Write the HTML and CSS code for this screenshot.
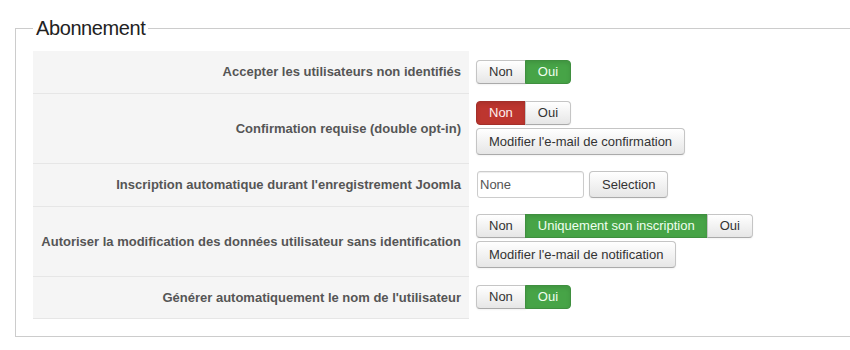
FILE: index.html
```html
<!DOCTYPE html>
<html lang="fr">
<head>
    <meta charset="UTF-8">
    <meta name="viewport" content="width=device-width, initial-scale=1.0">
    <title>Abonnement</title>
    <link rel="stylesheet" href="styles.css">
</head>
<body>

<fieldset class="adminform">
    <legend>Abonnement</legend>

    <table class="params">
        <tr>
            <th>Accepter les utilisateurs non identifiés</th>
            <td>
                <div class="btn-group">
                    <button type="button" class="btn">Non</button>
                    <button type="button" class="btn active-yes">Oui</button>
                </div>
            </td>
        </tr>
        <tr>
            <th>Confirmation requise (double opt-in)</th>
            <td>
                <div class="btn-group">
                    <button type="button" class="btn active-no">Non</button>
                    <button type="button" class="btn">Oui</button>
                </div>
                <button type="button" class="btn btn-block">Modifier l'e-mail de confirmation</button>
            </td>
        </tr>
        <tr>
            <th>Inscription automatique durant l'enregistrement Joomla</th>
            <td>
                <div class="select-row">
                    <input type="text" class="text-input" value="None">
                    <button type="button" class="btn">Selection</button>
                </div>
            </td>
        </tr>
        <tr>
            <th>Autoriser la modification des données utilisateur sans identification</th>
            <td>
                <div class="btn-group">
                    <button type="button" class="btn">Non</button>
                    <button type="button" class="btn active-yes">Uniquement son inscription</button>
                    <button type="button" class="btn">Oui</button>
                </div>
                <button type="button" class="btn btn-block">Modifier l'e-mail de notification</button>
            </td>
        </tr>
        <tr>
            <th>Générer automatiquement le nom de l'utilisateur</th>
            <td>
                <div class="btn-group">
                    <button type="button" class="btn">Non</button>
                    <button type="button" class="btn active-yes">Oui</button>
                </div>
            </td>
        </tr>
    </table>
</fieldset>

</body>
</html>
```

FILE: styles.css
```css
html {
    overflow: hidden;
}

body {
    font-family: "Liberation Sans", Arial, sans-serif;
    font-size: 13px;
    color: #333;
    background-color: #fff;
    margin: 0;
    padding: 17px 0 0 15px;
}

.adminform {
    width: calc(100% + 20px);
    margin: 0;
    padding: 12px 17px 17px 17px;
    border: 1px solid #ccc;
    box-sizing: border-box;
}

.adminform legend {
    font-size: 20px;
    line-height: 22px;
    letter-spacing: -0.4px;
    color: #222;
    padding: 0 3px;
    margin-left: 0;
}

.params {
    border-collapse: collapse;
}

.params th {
    width: 420px;
    height: 41.5px;
    padding: 0 8px;
    text-align: right;
    font-weight: bold;
    color: #555;
    background-color: #f5f5f5;
    border-top: 1px solid #e6e6e6;
    border-bottom: 1px solid #e6e6e6;
}

.params tr:first-child th {
    border-top: none;
}

.params td {
    padding: 8px 7px 8px 7px;
    vertical-align: middle;
}

.btn {
    font-family: "Liberation Sans", Arial, sans-serif;
    font-size: 13px;
    line-height: 17px;
    color: #333;
    padding: 4px 12px;
    border: 1px solid #c5c5c5;
    border-bottom-color: #aaa;
    border-radius: 4px;
    background-color: #f3f3f3;
    background-image: linear-gradient(to bottom, #fff, #e6e6e6);
    box-shadow: inset 0 1px 0 rgba(255, 255, 255, 0.2), 0 1px 2px rgba(0, 0, 0, 0.05);
    cursor: pointer;
}

.btn-block {
    display: block;
    margin-top: 3px;
}

.btn-group {
    display: flex;
}

.btn-group .btn {
    line-height: 18px;
    padding: 2px 12px;
    border-radius: 0;
    margin-left: -1px;
}

.btn-group .btn:first-child {
    margin-left: 0;
    border-radius: 4px 0 0 4px;
}

.btn-group .btn:last-child {
    border-radius: 0 4px 4px 0;
}

.btn-group .active-yes {
    background-image: none;
    background-color: #47a447;
    border-color: #3f8f3f;
    color: #f0fff0;
    box-shadow: inset 0 2px 4px rgba(0, 0, 0, 0.1);
}

.btn-group .active-no {
    background-image: none;
    background-color: #bd362f;
    border-color: #a3302a;
    color: #fff0f0;
    box-shadow: inset 0 2px 4px rgba(0, 0, 0, 0.1);
}

.select-row {
    display: flex;
    align-items: center;
    gap: 5px;
}

.text-input {
    font-family: "Liberation Sans", Arial, sans-serif;
    font-size: 13px;
    color: #555;
    width: 107px;
    height: 27px;
    padding: 4px 2px;
    margin-left: 1px;
    border: 1px solid #ccc;
    border-radius: 3px;
    box-sizing: border-box;
    box-shadow: inset 0 1px 1px rgba(0, 0, 0, 0.075);
}
```
